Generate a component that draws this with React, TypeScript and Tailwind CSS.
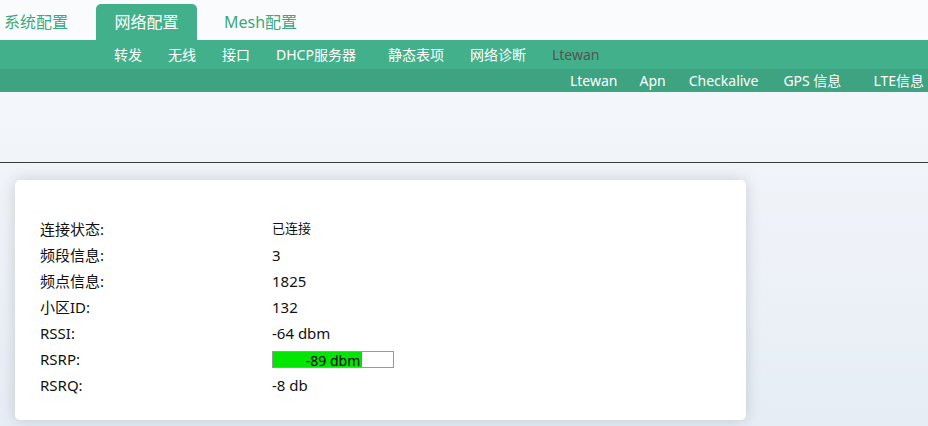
import React from "react"

const font = { fontFamily: '"Noto Sans", "Noto Sans CJK SC", sans-serif' }

const topTabs = [
  { label: "系统配置", active: false },
  { label: "网络配置", active: true },
  { label: "Mesh配置", active: false },
]

const subNav = ["转发", "无线", "接口", "DHCP服务器", "静态表项", "网络诊断", "Ltewan"]

const lteNav = [
  { label: "Ltewan", cls: "ml-0" },
  { label: "Apn", cls: "ml-[22px]" },
  { label: "Checkalive", cls: "ml-[23px]" },
  { label: "GPS 信息", cls: "ml-[25px]" },
  { label: "LTE信息", cls: "ml-[32px] text-[#555]" },
]

const rows = [
  { label: "连接状态:", value: "已连接", small: true },
  { label: "频段信息:", value: "3" },
  { label: "频点信息:", value: "1825" },
  { label: "小区ID:", value: "132" },
  { label: "RSSI:", value: "-64 dbm" },
  { label: "RSRP:", bar: { text: "-89 dbm", pct: 74 } },
  { label: "RSRQ:", value: "-8 db" },
]

export default function App() {
  return (
    <div style={font} className="w-[928px] h-[426px] overflow-hidden bg-gradient-to-b from-[#f7f9fc] to-[#e7edf5]">
      {/* top tabs */}
      <div className="h-[40px] bg-[#fafbfd] flex items-end">
        {topTabs.map((t) =>
          t.active ? (
            <div
              key={t.label}
              className="h-[36px] w-[101px] rounded-t-[5px] bg-[#42b08a] text-white text-[16px] flex items-center justify-center pb-[1px]"
            >
              {t.label}
            </div>
          ) : (
            <div
              key={t.label}
              className={`h-[36px] flex items-center text-[16px] text-[#3aa880] pb-[1px] ${
                t.label === "系统配置" ? "pl-[4px] w-[96px]" : "pl-[27px]"
              }`}
            >
              {t.label}
            </div>
          )
        )}
      </div>

      {/* sub nav */}
      <div className="h-[29px] bg-[#42b08a] flex items-center pl-[101px]">
        {subNav.map((s) => (
          <div
            key={s}
            className={`px-[13px] text-[14px] ${s === "Ltewan" ? "text-[#555]" : "text-white"} ${
              s === "DHCP服务器" ? "pr-[19px]" : ""
            }`}
          >
            {s}
          </div>
        ))}
      </div>
      <div className="h-[23px] bg-[#3ea381] flex items-center justify-end pr-[4px]">
        {lteNav.map((n) => (
          <div key={n.label} className={`text-[14px] text-white ${n.cls}`}>
            {n.label}
          </div>
        ))}
      </div>

      <div className="h-[70px]" />
      <div className="h-px bg-[#3a3a3a]" />

      {/* status card */}
      <div className="pt-[17px] pl-[15px]">
        <div className="w-[731px] h-[240px] bg-white rounded-[5px] shadow-[0_0_16px_rgba(0,0,0,0.16)] pt-[36px] pl-[25px]">
          {rows.map((r) => (
            <div key={r.label} className="h-[26px] flex items-center text-[15px] text-[#111]">
              <div className="w-[232px]">{r.label}</div>
              {r.bar ? (
                <div className="relative w-[122px] h-[17px] border border-[#999] bg-white">
                  <div className="h-full bg-[#00e600]" style={{ width: `${r.bar.pct}%` }} />
                  <div className="absolute inset-0 flex items-center justify-center text-[14px] leading-none pt-[3px] text-black">
                    {r.bar.text}
                  </div>
                </div>
              ) : (
                <div className={r.small ? "text-[13px]" : ""}>{r.value}</div>
              )}
            </div>
          ))}
        </div>
      </div>
    </div>
  )
}
